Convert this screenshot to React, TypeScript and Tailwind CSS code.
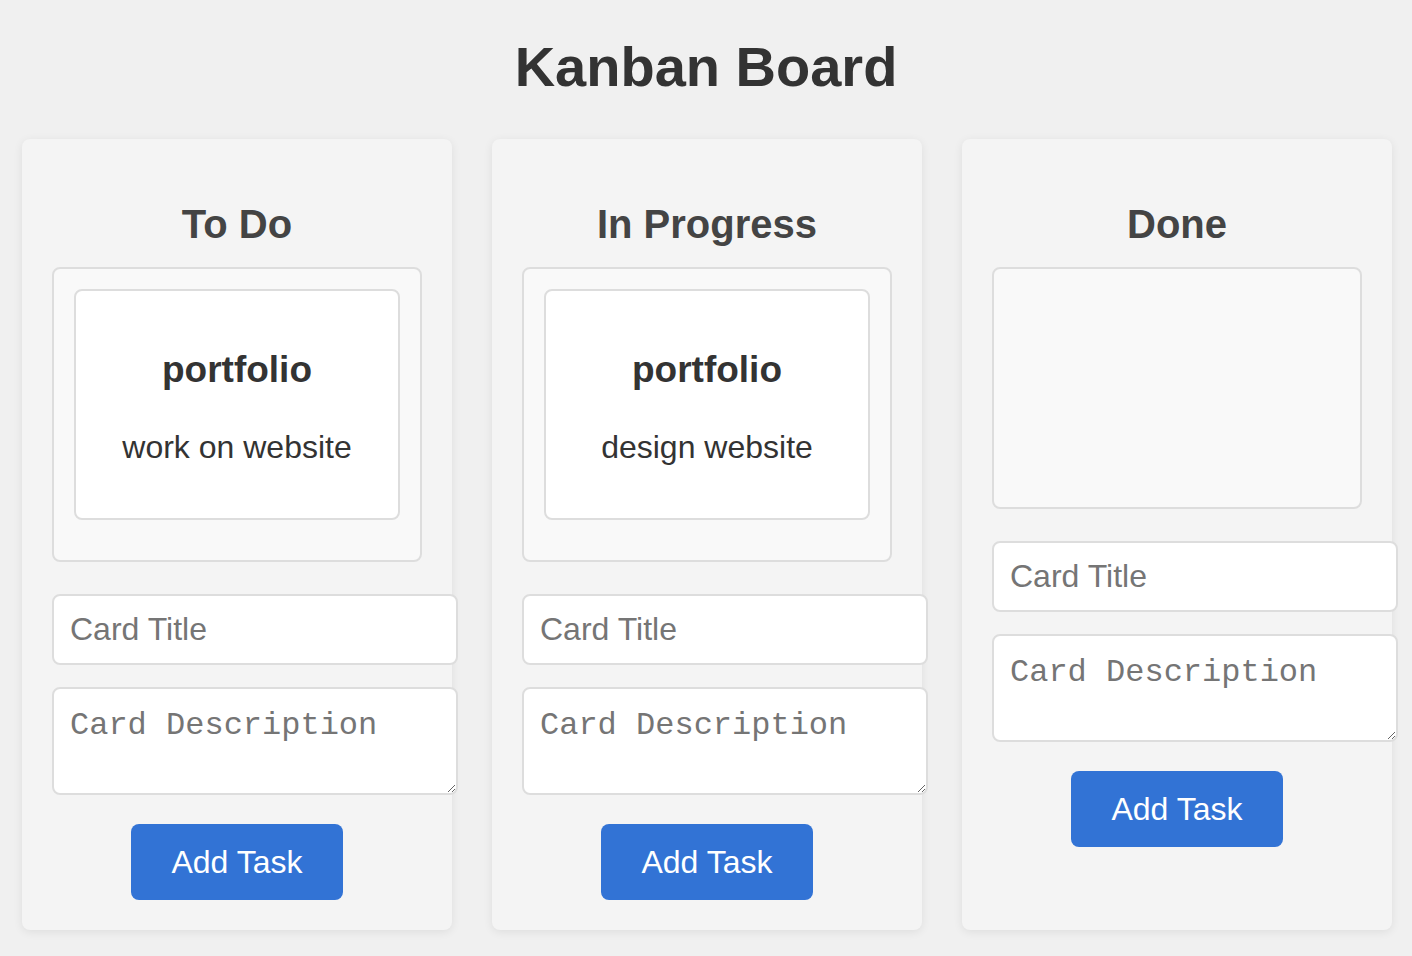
import React from "react";

type Card = { title: string; desc: string };
type Col = { name: string; cards: Card[] };

const columns: Col[] = [
  { name: "To Do", cards: [{ title: "portfolio", desc: "work on website" }] },
  { name: "In Progress", cards: [{ title: "portfolio", desc: "design website" }] },
  { name: "Done", cards: [] },
];

function Column({ col }: { col: Col }) {
  return (
    <div className="w-[430px] shrink-0 bg-[#f4f4f4] rounded-[8px] shadow-[0_2px_10px_rgba(0,0,0,0.08)] px-[30px] pt-[30px] pb-[30px] flex flex-col">
      <h2 className="mt-[32px] mb-[20px] text-center text-[40px] leading-[46px] font-bold text-[#444]">
        {col.name}
      </h2>
      <div className="box-border min-h-[242px] bg-[#f9f9f9] border-2 border-[#dddddd] rounded-[8px] p-[20px]">
        {col.cards.map((c, i) => (
          <div
            key={i}
            className="bg-white border-2 border-[#dddddd] rounded-[8px] px-[20px] pt-[20px] pb-[20px] mb-[20px] text-center text-[#333]"
          >
            <h3 className="mt-[37px] mb-[38px] text-[37px] leading-[43px] font-bold">{c.title}</h3>
            <p className="mb-[32px] text-[32px] leading-[37px]">{c.desc}</p>
          </div>
        ))}
      </div>
      <input
        type="text"
        placeholder="Card Title"
        className="mt-[32px] box-content w-[370px] h-[37px] px-[16px] py-[15px] bg-white border-2 border-[#dddddd] rounded-[8px] text-[32px] leading-[37px] text-[#333] placeholder:text-[#757575] outline-none"
        style={{ fontFamily: '"Liberation Sans", Arial, sans-serif' }}
      />
      <textarea
        placeholder="Card Description"
        className="mt-[22px] box-content w-[370px] h-[70px] px-[16px] pt-[19px] pb-[15px] bg-white border-2 border-[#dddddd] rounded-[8px] text-[32px] leading-[36px] text-[#333] placeholder:text-[#757575] outline-none block"
        style={{ fontFamily: '"Liberation Mono", "Courier New", monospace' }}
      />
      <div className="flex justify-center mt-[29px]">
        <button className="w-[212px] h-[76px] bg-[#3273d5] text-white rounded-[8px] text-[32px] leading-[37px]">
          Add Task
        </button>
      </div>
    </div>
  );
}

export default function App() {
  return (
    <div
      className="min-h-[956px] bg-[#f0f0f0] pt-[35px]"
      style={{ fontFamily: '"Liberation Sans", Arial, sans-serif' }}
    >
      <h1 className="text-center text-[56px] leading-[64px] font-bold text-[#333] mb-[40px]">Kanban Board</h1>
      <div className="flex items-stretch gap-[40px] pl-[22px]">
        {columns.map((c) => (
          <Column key={c.name} col={c} />
        ))}
      </div>
    </div>
  );
}
